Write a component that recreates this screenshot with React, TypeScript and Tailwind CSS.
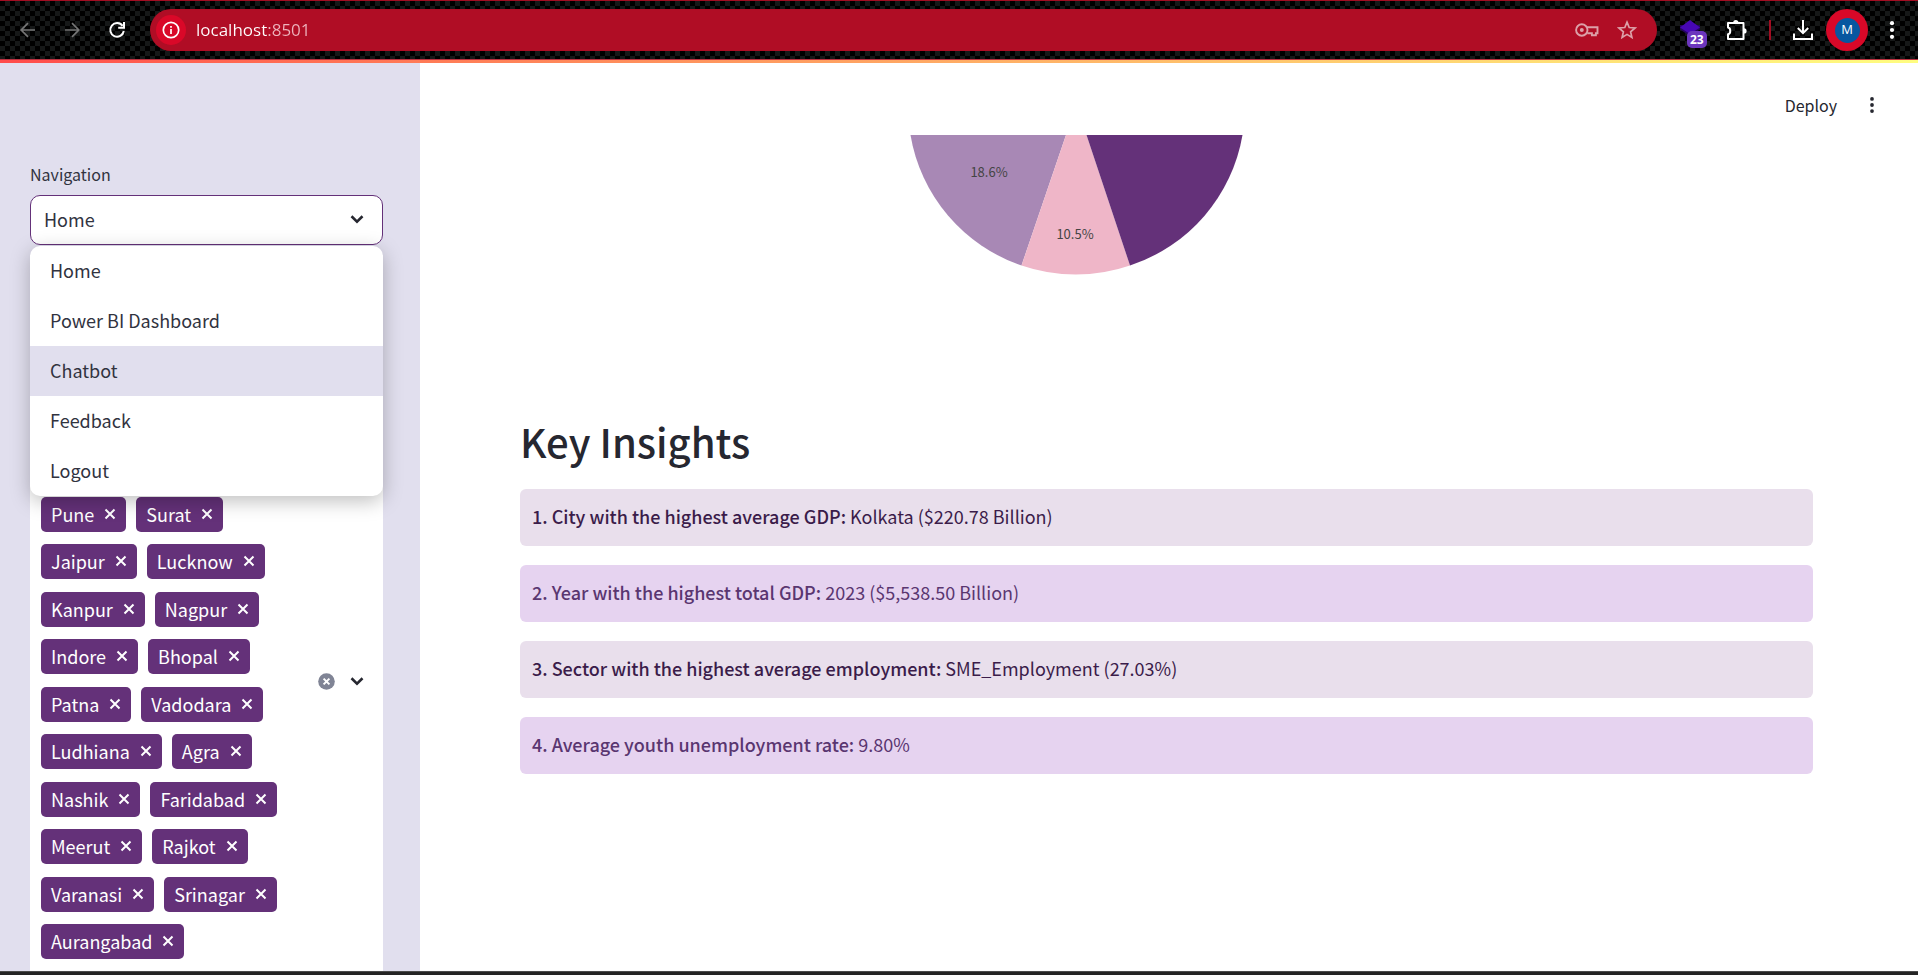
import React from "react";

const MENU = ["Home", "Power BI Dashboard", "Chatbot", "Feedback", "Logout"];

const CITY_ROWS = [
  ["Pune", "Surat"],
  ["Jaipur", "Lucknow"],
  ["Kanpur", "Nagpur"],
  ["Indore", "Bhopal"],
  ["Patna", "Vadodara"],
  ["Ludhiana", "Agra"],
  ["Nashik", "Faridabad"],
  ["Meerut", "Rajkot"],
  ["Varanasi", "Srinagar"],
  ["Aurangabad"],
];

const INSIGHTS = [
  { label: "1. City with the highest average GDP:", value: "Kolkata ($220.78 Billion)" },
  { label: "2. Year with the highest total GDP:", value: "2023 ($5,538.50 Billion)" },
  { label: "3. Sector with the highest average employment:", value: "SME_Employment (27.03%)" },
  { label: "4. Average youth unemployment rate:", value: "9.80%" },
];

function Chevron() {
  return (
    <svg viewBox="0 0 20 20" className="h-5 w-5 fill-none stroke-[#262730] stroke-[2.6]">
      <path d="M4.5 7.3 10 12.6l5.5-5.3" />
    </svg>
  );
}

function Dots({ className }: { className: string }) {
  return (
    <svg viewBox="0 0 6 20" className={className}>
      <circle cx="3" cy="3.2" r="2.1" />
      <circle cx="3" cy="10" r="2.1" />
      <circle cx="3" cy="16.8" r="2.1" />
    </svg>
  );
}

function BrowserBar() {
  return (
    <header className="flex h-[60px] shrink-0 items-center border-t border-b border-t-[#a30d22] border-b-[#b8303f] bg-black bg-[conic-gradient(#161818_25%,#000_0_50%,#161818_0_75%,#000_0)] bg-size-[10px_10px] pr-[23px] pl-5">
      <button aria-label="Back" className="text-[#767676]">
        <svg viewBox="0 0 16 16" className="h-4 w-4 fill-none stroke-current stroke-[1.7]">
          <path d="M15 8H1.5M8 1.2 1.2 8 8 14.8" />
        </svg>
      </button>
      <button aria-label="Forward" className="ml-7 text-[#767676]">
        <svg viewBox="0 0 16 16" className="h-4 w-4 fill-none stroke-current stroke-[1.7]">
          <path d="M1 8h13.5M8 1.2 14.8 8 8 14.8" />
        </svg>
      </button>
      <button aria-label="Reload" className="ml-7 text-white">
        <svg viewBox="0 0 18 18" className="h-[18px] w-[18px] fill-none stroke-current stroke-2">
          <path d="M14.6 4.9A6.8 6.8 0 1 0 15.8 10M16 1v5.8h-5.8" />
        </svg>
      </button>
      <div className="ml-6 flex h-[42px] min-w-0 flex-1 items-center rounded-full bg-[#b00d25] pr-5 pl-1.5">
        <button aria-label="Site information" className="flex h-[30px] w-[30px] items-center justify-center rounded-full bg-[#d90828]">
          <svg viewBox="0 0 18 18" className="h-[18px] w-[18px] fill-none stroke-white stroke-[1.7]">
            <circle cx="9" cy="9" r="7.7" />
            <path d="M9 8v5M9 5v1.8" />
          </svg>
        </button>
        <input
          aria-label="Address"
          defaultValue="localhost:8501"
          className="ml-[10px] h-8 min-w-0 flex-1 bg-[linear-gradient(90deg,#fff_72px,#eeb4bd_72px)] bg-clip-text font-['Open_Sans','Noto_Sans',sans-serif] text-[17px] leading-8 text-transparent outline-none"
        />
        <button aria-label="Passwords" className="text-[#dca0a8]">
          <svg viewBox="0 0 24 14" className="h-[14px] w-6 fill-none stroke-current stroke-[1.9]">
            <circle cx="6.8" cy="7" r="5.7" />
            <circle cx="6.8" cy="7" r="2" className="fill-current stroke-none" />
            <path d="M11.8 4.2h10.7v6h-1.6v2h-4v-2h-4.6" />
          </svg>
        </button>
        <button aria-label="Bookmark" className="ml-[18px] text-[#dca0a8]">
          <svg viewBox="0 0 20 20" className="h-5 w-5 fill-none stroke-current stroke-[1.7]">
            <path d="m10 2.2 2.2 5.3 5.8.5-4.4 3.8 1.3 5.6-4.9-3-4.9 3 1.3-5.6L2 8l5.8-.5z" />
          </svg>
        </button>
      </div>
      <button aria-label="Extension, 23 notifications" className="relative ml-[23px] h-[30px] w-7">
        <svg viewBox="0 0 28 30" className="h-[30px] w-7">
          <path d="M0 14.5 10 21l10-6.5V10H0z" fill="#26045f" />
          <path d="M10 5 20 12.5 10 19 0 12.5z" fill="#4707b5" />
        </svg>
        <span className="absolute top-4 left-[7px] rounded-[5px] bg-[#6c36bd] px-[3px] font-['Open_Sans',sans-serif] text-[12px] leading-[17px] font-bold text-white">
          23
        </span>
      </button>
      <button aria-label="Extensions" className="ml-[18px] text-white">
        <svg viewBox="0 0 22 22" className="h-[22px] w-[22px] fill-none stroke-current stroke-2">
          <path d="M2 4h15.5v16H2v-4.8c3-.4 3-6.200 0-6.600z" strokeLinejoin="round" />
          <path d="M7.200 3.500a2.600 2.600 0 0 1 5.200 0zM18 9.300a2.600 2.600 0 0 1 0 5.200z" className="fill-current stroke-none" />
        </svg>
      </button>
      <span className="ml-[21px] h-5 w-0.5 bg-[#a30d22]" />
      <button aria-label="Downloads" className="ml-[22px] text-white">
        <svg viewBox="0 0 20 20" className="h-5 w-5 fill-none stroke-current stroke-2">
          <path d="M10 0v13M4.800 8l5.200 5.200L15.200 8M1 13.500V19h18v-5.500" />
        </svg>
      </button>
      <button aria-label="Profile" className="ml-[13px] flex h-[42px] w-[42px] items-center justify-center rounded-full bg-[#d90828]">
        <span className="flex h-[25px] w-[25px] items-center justify-center rounded-full bg-[#0757a0] font-['Open_Sans',sans-serif] text-[13px] font-medium text-white">
          M
        </span>
      </button>
      <button aria-label="Browser menu" className="ml-[21px]">
        <Dots className="h-5 w-1.5 fill-white" />
      </button>
    </header>
  );
}

function Tag({ name }: { name: string }) {
  return (
    <span className="flex h-[35px] items-center rounded-[5px] bg-[#643179] px-[10px] pb-px text-[18px] leading-6 text-white">
      {name}
      <button aria-label={`Remove ${name}`} className="ml-[10px]">
        <svg viewBox="0 0 12 12" className="h-3 w-3 fill-none stroke-white stroke-2">
          <path d="m1.500 1.500 9 9m0-9-9 9" />
        </svg>
      </button>
    </span>
  );
}

function Sidebar() {
  return (
    <aside className="w-[420px] shrink-0 overflow-hidden bg-[#e1dfee] pt-[99px] pr-[37px] pl-[30px] text-[#31333f]">
      <span id="nav-label" className="block text-[16px] leading-6">Navigation</span>
      <div className="relative mt-[9px]">
        <button
          aria-labelledby="nav-label"
          aria-haspopup="listbox"
          aria-expanded="true"
          className="flex h-[50px] w-full items-center justify-between rounded-[10px] border border-[#643179] bg-white pr-[15px] pb-0.5 pl-[13px] text-[18px]"
        >
          Home
          <Chevron />
        </button>
        <ul role="listbox" aria-labelledby="nav-label" className="absolute top-[51px] right-0 left-0 overflow-hidden rounded-[10px] bg-white shadow-[0_5px_20px_rgba(0,0,0,0.26)]">
          {MENU.map((item) => (
            <li key={item} role="option" aria-selected={item === "Chatbot"} className="flex h-[50px] items-center px-5 pb-0.5 text-[18px] aria-selected:bg-[#e1dfee]">
              {item}
            </li>
          ))}
        </ul>
      </div>
      <div className="mt-[145px] flex items-center rounded-[10px] bg-white pt-[107px] pr-4 pb-[14px] pl-[11px]">
        <div className="flex-1">
          {CITY_ROWS.map((row) => (
            <div key={row[0]} className="flex gap-[10px] odd:pb-3 even:pb-[13px] last:pb-0">
              {row.map((city) => <Tag key={city} name={city} />)}
            </div>
          ))}
        </div>
        <div className="flex items-center self-start pt-[174px]">
          <button aria-label="Clear all">
            <svg viewBox="0 0 17 17" className="h-[17px] w-[17px]">
              <circle cx="8.500" cy="8.500" r="8.300" fill="#808495" />
              <path d="m5.600 5.600 5.800 5.800m0-5.800-5.800 5.800" stroke="#fff" strokeWidth="2" />
            </svg>
          </button>
          <button aria-label="Open city list" className="ml-3">
            <Chevron />
          </button>
        </div>
      </div>
    </aside>
  );
}

function PieChart() {
  return (
    <svg viewBox="0 0 334 140" className="h-[140px] w-[334px]" role="img" aria-label="Sector share pie chart">
      <path d="M0.500 0A167 167 0 0 0 111.500 130.500L156 0Z" fill="#a888b5" />
      <path d="M111.500 130.500A167 167 0 0 0 220 130.500L176.500 0H156Z" fill="#efb6c8" />
      <path d="M220 130.500A167 167 0 0 0 332.500 0H176.500Z" fill="#643179" />
      <g className="fill-[#444444] text-[13px]" textAnchor="middle">
        <text x="79" y="42">18.6%</text>
        <text x="165" y="104">10.5%</text>
      </g>
    </svg>
  );
}

function Dashboard() {
  return (
    <main className="min-w-0 flex-1 bg-white">
      <div className="flex h-[72px] items-start justify-end pt-[30px] pr-[43px] text-[#262730]">
        <button className="text-[16px] leading-6">Deploy</button>
        <button aria-label="App menu" className="mt-[3px] ml-8">
          <Dots className="h-[18px] w-1.5 fill-current" />
        </button>
      </div>
      <div className="pr-[105px] pl-[100px]">
        <div className="flex h-[262px] justify-center pr-[179px]">
          <PieChart />
        </div>
        <h1 className="pt-[17px] text-[40px] leading-[54px] font-medium text-[#262730]">Key Insights</h1>
        <ul className="mt-[21px] flex flex-col gap-[19px] text-[18px] leading-[31px]">
          {INSIGHTS.map(({ label, value }) => (
            <li key={label} className="rounded-md px-3 pt-3 pb-[14px] odd:bg-[#e9dfec] odd:text-[#3b1c4a] even:bg-[#e6d3f0] even:text-[#5a3670]">
              <strong className="font-medium">{label}</strong> {value}
            </li>
          ))}
        </ul>
      </div>
    </main>
  );
}

export default function App() {
  return (
    <div className="flex h-screen flex-col overflow-hidden font-['Noto_Sans_CJK_SC',sans-serif]">
      <BrowserBar />
      <div className="h-[3px] shrink-0 bg-linear-to-r from-[#ff4b4b] to-[#fffd80]" />
      <div className="flex min-h-0 flex-1">
        <Sidebar />
        <Dashboard />
      </div>
      <footer className="h-1 shrink-0 border-t border-[#4b4b4b] bg-[#242424]" />
    </div>
  );
}
